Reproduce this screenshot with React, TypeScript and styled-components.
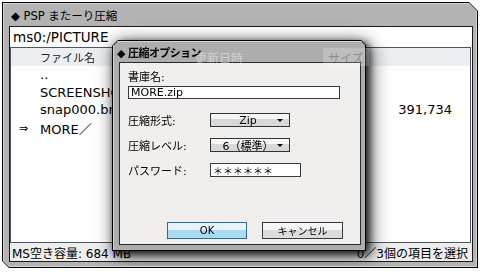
import React from "react";
import styled, { createGlobalStyle } from "styled-components";

const FONT = `"DejaVu Sans", "Noto Sans CJK JP", sans-serif`;

const Global = createGlobalStyle`
  html, body { margin: 0; padding: 0; background: #fff; }
  body { font-family: ${FONT}; color: #000; }
  * { box-sizing: border-box; }
`;

const Screen = styled.div`
  width: 480px;
  height: 272px;
  padding: 2px;
  overflow: hidden;
`;

const WindowBorder = styled.div`
  width: 476px;
  height: 266px;
  background: #000;
  padding: 1px;
  clip-path: polygon(0 0, calc(100% - 9px) 0, 100% 9px, 100% 100%, 7px 100%, 0 calc(100% - 7px));
`;

const WindowHighlight = styled.div`
  height: 100%;
  background: #d6d6d6;
  padding: 1px;
  clip-path: polygon(0 0, calc(100% - 8px) 0, 100% 8px, 100% 100%, 6px 100%, 0 calc(100% - 6px));
`;

const WindowBody = styled.div`
  position: relative;
  height: 100%;
  background: #b3b3b3;
  display: flex;
  flex-direction: column;
  padding: 0 3px 4px 5px;
  clip-path: polygon(0 0, calc(100% - 7px) 0, 100% 7px, 100% 100%, 5px 100%, 0 calc(100% - 5px));
`;

const AppTitle = styled.div`
  height: 22px;
  display: flex;
  align-items: center;
  padding-left: 2px;
  font-size: 11.5px;
  white-space: pre;
`;

const Panel = styled.div`
  flex: 1;
  background: #fff;
  border: 1px solid #1a1a1a;
  display: flex;
  flex-direction: column;
  min-height: 0;
`;

const PathRow = styled.div`
  height: 20px;
  display: flex;
  align-items: center;
  padding-left: 3px;
  font-size: 13.5px;
`;

const List = styled.div`
  flex: 1;
  margin-right: 1px;
  border: 1px solid #4e5563;
  display: flex;
  flex-direction: column;
`;

const Columns = styled.div<{ $h: number }>`
  display: grid;
  grid-template-columns: 29px 155px 133px 1fr;
  height: ${(p) => p.$h}px;
  align-items: center;
`;

const HeaderRow = styled(Columns)`
  background: #eceef1;
  font-size: 11px;
  color: #222;
`;

const HeaderCell = styled.div<{ $over?: boolean }>`
  display: flex;
  align-items: center;
  height: 100%;
  ${(p) => (p.$over ? "position: relative; z-index: 3;" : "")}
`;

const FadedLabel = styled.span`
  font-size: 12px;
  color: rgba(255, 255, 255, 0.45);
`;

const SizeLabel = styled.span`
  display: flex;
  align-items: center;
  height: 100%;
  margin-left: -5px;
  padding: 0 5px;
  font-size: 12px;
  background: rgba(255, 255, 255, 0.2);
  color: rgba(60, 60, 60, 0.4);
`;

const FileRow = styled(Columns)`
  font-size: 13px;
  white-space: nowrap;
`;

const Marker = styled.div`
  font-size: 11px;
  padding-left: 8px;
`;

const SizeCell = styled.div`
  text-align: right;
  padding-right: 18px;
`;

const StatusBar = styled.div`
  height: 18px;
  display: flex;
  align-items: center;
  justify-content: space-between;
  padding: 0 4px 0 2px;
  background: #eeeeee;
  font-size: 12px;
`;

/* ---------- dialog ---------- */

const DialogShadow = styled.div`
  position: absolute;
  left: 108px;
  top: 36px;
  z-index: 2;
  filter: drop-shadow(3px 3px 4px rgba(0, 0, 0, 0.85)) drop-shadow(2px 2px 9px rgba(0, 0, 0, 0.6));
`;

const DialogBorder = styled.div`
  width: 254px;
  height: 211px;
  background: #000;
  padding: 1px;
  clip-path: polygon(6px 0, calc(100% - 5px) 0, 100% 5px, 100% 100%, 0 100%, 0 6px);
`;

const DialogFrame = styled.div`
  height: 100%;
  background: #adadad;
  box-shadow: inset 1px 1px 0 #d4d4d4;
  display: flex;
  flex-direction: column;
  clip-path: polygon(5px 0, calc(100% - 4px) 0, 100% 4px, 100% 100%, 0 100%, 0 5px);
`;

const DialogTitle = styled.div`
  height: 21px;
  display: flex;
  align-items: center;
  padding-left: 4px;
  font-size: 11px;
  font-weight: 700;
  letter-spacing: -0.6px;
  white-space: pre;
`;

const DialogPanel = styled.div`
  flex: 1;
  margin: 0 4px 5px 6px;
  border: 1px solid #2a2a2a;
  background: #f1efed;
  padding-left: 8px;
  display: flex;
  flex-direction: column;
`;

const FieldLabel = styled.div`
  font-size: 11px;
  line-height: 14px;
  margin-top: 8px;
`;

const TextBox = styled.div<{ $w: number }>`
  width: ${(p) => p.$w}px;
  height: 14px;
  background: #fff;
  border: 1px solid #3a3a3a;
  padding-left: 2px;
  display: flex;
  align-items: center;
  font-size: 11px;
`;

const NameBox = styled(TextBox)`
  margin-top: 1px;
  height: 13px;
`;

const FormGrid = styled.div`
  margin-top: 14px;
  display: grid;
  grid-template-columns: 82px auto;
  grid-auto-rows: 14px;
  row-gap: 11px;
  align-items: center;
  font-size: 11px;
`;

const Select = styled.div`
  width: 80px;
  height: 14px;
  border: 1px solid #333;
  background: linear-gradient(#f6f6f6 0, #f6f6f6 40%, #d8d8d8 40%, #d8d8d8 100%);
  display: flex;
  align-items: center;
  font-size: 11px;
`;

const SelectText = styled.span`
  flex: 1;
  text-align: center;
  padding-left: 8px;
  white-space: nowrap;
`;

const Arrow = styled.span`
  width: 0;
  height: 0;
  border-left: 3px solid transparent;
  border-right: 3px solid transparent;
  border-top: 3px solid #000;
  margin: 1px 6px 0 0;
`;

const Stars = styled.span`
  font-size: 10px;
  letter-spacing: 0;
`;

const ButtonRow = styled.div`
  margin-top: auto;
  margin-bottom: 5px;
  padding-left: 39px;
  display: flex;
  gap: 15px;
`;

const Button = styled.div<{ $primary?: boolean; $w: number }>`
  width: ${(p) => p.$w}px;
  height: 17px;
  display: flex;
  align-items: center;
  justify-content: center;
  font-size: 10px;
  border: 1px solid ${(p) => (p.$primary ? "#2c6d97" : "#3a3a3a")};
  background: ${(p) =>
    p.$primary
      ? "linear-gradient(#e6f5fd 0, #e6f5fd 45%, #aadbf4 45%, #aadbf4 100%)"
      : "linear-gradient(#f6f6f6 0, #f6f6f6 45%, #dcdcdc 45%, #dcdcdc 100%)"};
`;

const files = [
  { mark: "", name: "..", size: "" },
  { mark: "", name: "SCREENSHOT", size: "" },
  { mark: "", name: "snap000.bmp", size: "391,734" },
  { mark: "⇒", name: "MORE／", size: "" },
];

export default function App() {
  return (
    <Screen>
      <Global />
      <WindowBorder>
        <WindowHighlight>
          <WindowBody>
            <AppTitle>◆ PSP またーり圧縮</AppTitle>
            <Panel>
              <PathRow>ms0:/PICTURE</PathRow>
              <List>
                <HeaderRow $h={18}>
                  <HeaderCell />
                  <HeaderCell>ファイル名</HeaderCell>
                  <HeaderCell $over>
                    <FadedLabel>更新日時</FadedLabel>
                  </HeaderCell>
                  <HeaderCell $over>
                    <SizeLabel>サイズ</SizeLabel>
                  </HeaderCell>
                </HeaderRow>
                {files.map((f) => (
                  <FileRow $h={17.5} key={f.name}>
                    <Marker>{f.mark}</Marker>
                    <div>{f.name}</div>
                    <div />
                    <SizeCell>{f.size}</SizeCell>
                  </FileRow>
                ))}
              </List>
              <StatusBar>
                <span>MS空き容量: 684 MB</span>
                <span>0／3個の項目を選択</span>
              </StatusBar>
            </Panel>

            <DialogShadow>
              <DialogBorder>
                <DialogFrame>
                  <DialogTitle>◆ 圧縮オプション</DialogTitle>
                  <DialogPanel>
                    <FieldLabel>書庫名:</FieldLabel>
                    <NameBox $w={212}>MORE.zip</NameBox>
                    <FormGrid>
                      <span>圧縮形式:</span>
                      <Select>
                        <SelectText>Zip</SelectText>
                        <Arrow />
                      </Select>
                      <span>圧縮レベル:</span>
                      <Select>
                        <SelectText>6（標準）</SelectText>
                        <Arrow />
                      </Select>
                      <span>パスワード:</span>
                      <TextBox $w={91}>
                        <Stars>＊＊＊＊＊＊</Stars>
                      </TextBox>
                    </FormGrid>
                    <ButtonRow>
                      <Button $primary $w={80}>OK</Button>
                      <Button $w={81}>キャンセル</Button>
                    </ButtonRow>
                  </DialogPanel>
                </DialogFrame>
              </DialogBorder>
            </DialogShadow>
          </WindowBody>
        </WindowHighlight>
      </WindowBorder>
    </Screen>
  );
}
